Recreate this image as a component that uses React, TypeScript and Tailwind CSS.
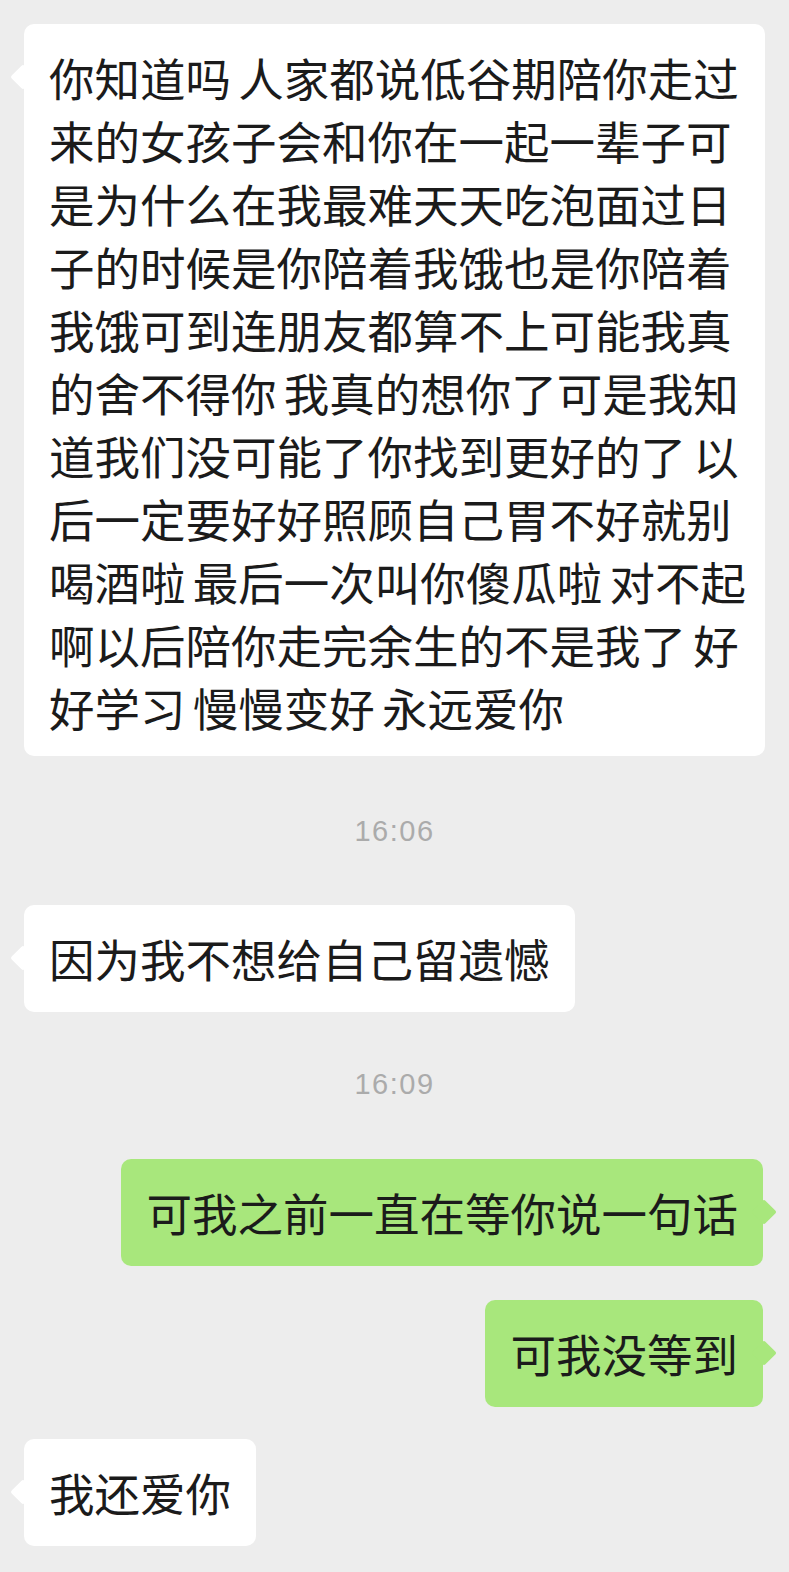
const lines = [
  "你知道吗 人家都说低谷期陪你走过",
  "来的女孩子会和你在一起一辈子可",
  "是为什么在我最难天天吃泡面过日",
  "子的时候是你陪着我饿也是你陪着",
  "我饿可到连朋友都算不上可能我真",
  "的舍不得你 我真的想你了可是我知",
  "道我们没可能了你找到更好的了 以",
  "后一定要好好照顾自己胃不好就别",
  "喝酒啦 最后一次叫你傻瓜啦 对不起",
  "啊以后陪你走完余生的不是我了 好",
  "好学习 慢慢变好 永远爱你",
];

const font = { fontFamily: '"Noto Sans CJK SC", "Noto Sans", sans-serif' };

const LeftBubble = ({ children, className = "" }: { children: React.ReactNode; className?: string }) => (
  <div className={`relative self-start ml-[24px] bg-white rounded-[10px] px-[25px] text-[#1b1b1b] text-[45.5px] leading-[63px] ${className}`}>
    <div className="absolute left-[-10px] top-[44px] w-[18px] h-[18px] bg-white rotate-45 rounded-[2px]" />
    <div className="relative whitespace-nowrap [word-spacing:-3px]">{children}</div>
  </div>
);

const RightBubble = ({ children, className = "" }: { children: React.ReactNode; className?: string }) => (
  <div className={`relative self-end mr-[26px] bg-[#a8e77c] rounded-[10px] px-[25px] py-[22px] text-[#1b1b1b] text-[45.5px] leading-[63px] ${className}`}>
    <div className="absolute right-[-10px] top-[44px] w-[18px] h-[18px] bg-[#a8e77c] rotate-45 rounded-[2px]" />
    <div className="relative whitespace-nowrap">{children}</div>
  </div>
);

const Time = ({ t, className = "" }: { t: string; className?: string }) => (
  <div
    className={`text-center text-[29px] leading-[40px] text-[#ababab] tracking-[1.5px] ${className}`}
    style={{ fontFamily: '"Liberation Sans", Arial, sans-serif' }}
  >
    {t}
  </div>
);

export default function App() {
  return (
    <div className="min-h-screen w-full bg-[#ededed] flex flex-col pt-[24px] pb-[27px]" style={font}>
      <LeftBubble className="pt-[22px] pb-[17px] w-[741px]">
        {lines.map((l, i) => (
          <div key={i}>{l}</div>
        ))}
      </LeftBubble>

      <Time t="16:06" className="mt-[55px]" />

      <LeftBubble className="mt-[54px] py-[22px]">因为我不想给自己留遗憾</LeftBubble>

      <Time t="16:09" className="mt-[52px]" />

      <RightBubble className="mt-[55px]">可我之前一直在等你说一句话</RightBubble>
      <RightBubble className="mt-[34px]">可我没等到</RightBubble>

      <LeftBubble className="mt-[32px] py-[22px]">我还爱你</LeftBubble>
    </div>
  );
}
